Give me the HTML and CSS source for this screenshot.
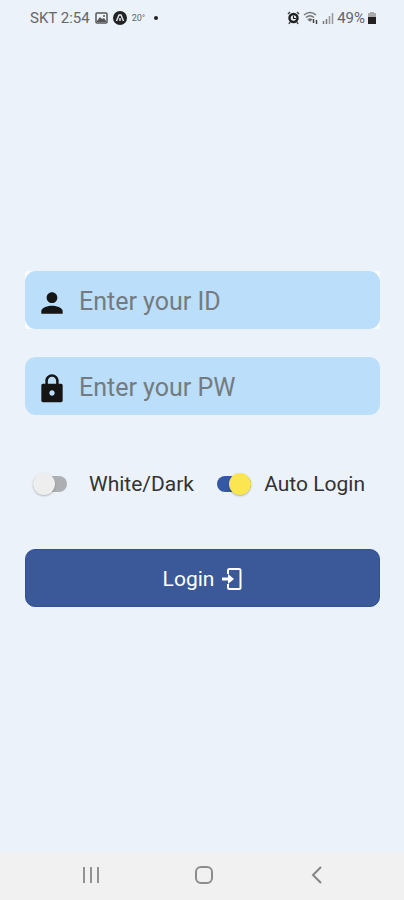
FILE: index.html
```html
<!DOCTYPE html>
<html lang="en">
<head>
<meta charset="utf-8">
<meta name="viewport" content="width=device-width, initial-scale=1">
<title>Login</title>
<link rel="stylesheet" href="styles.css">
</head>
<body>
<header class="status">
  <div class="status-group">
    <span>SKT 2:54</span>
    <svg width="13" height="12" viewBox="0 0 13 12"><rect x="1" y="1" width="11" height="10" rx="1" fill="none" stroke="#555" stroke-width="1.5"/><path d="M2 9l3-4 2 2 2-1 2 3v1H2z" fill="#555"/><circle cx="9" cy="4" r="1" fill="#555"/></svg>
    <svg width="14" height="14" viewBox="0 0 14 14"><circle cx="7" cy="7" r="7" fill="#222"/><path d="M3.500 10L6 4h2l2.500 6M7 7v3" fill="none" stroke="#dfe5ec" stroke-width="1.500"/></svg>
    <span class="temp">20°</span>
    <span class="dot"></span>
  </div>
  <div class="status-group status-right">
    <svg width="13" height="14" viewBox="0 0 13 14"><path d="M1 3l2-2M12 3l-2-2M2 13l1-2M11 13l-1-2" stroke="#444" stroke-width="1.500"/><circle cx="6.500" cy="7" r="4" fill="none" stroke="#222" stroke-width="2.500"/><path d="M6.500 4.500V7.500H9" fill="none" stroke="#222" stroke-width="1.200"/></svg>
    <svg width="16" height="14" viewBox="0 0 16 14"><path d="M1 4q6-5 12 0M3 6.500q4-3.500 8 0M5 9q2-2 4 0" fill="none" stroke="#777" stroke-width="1.500"/><path d="M7 11L4.500 8h5z" fill="#777"/><path d="M10.500 8v4M13.500 9v4" stroke="#444" stroke-width="1.500"/></svg>
    <svg width="12" height="14" viewBox="0 0 12 14"><path d="M1.500 10v3M4.500 8v5" stroke="#777" stroke-width="1.500"/><path d="M7.500 5v8M10.500 2v11" stroke="#999" stroke-width="1.500"/></svg>
    <span>49%</span>
    <svg width="8" height="12" viewBox="0 0 8 12"><path d="M2 0h4v1h2v5H0V1h2z" fill="#aaa"/><path d="M0 5h8v7H0z" fill="#222"/></svg>
  </div>
</header>
<main class="content">
  <form class="login">
    <div class="field-back">
      <label class="field">
        <svg class="field-icon" viewBox="0 0 24 24" aria-hidden="true"><path d="M12 12c2.210 0 4-1.790 4-4s-1.790-4-4-4-4 1.790-4 4 1.790 4 4 4zm0 2c-2.670 0-8 1.340-8 4v2h16v-2c0-2.660-5.330-4-8-4z"/></svg>
        <input class="field-input" type="text" placeholder="Enter your ID" aria-label="ID">
      </label>
    </div>
    <label class="field">
      <svg class="field-icon" viewBox="0 0 24 24" aria-hidden="true"><path d="M18 8h-1V6c0-2.760-2.240-5-5-5S7 3.240 7 6v2H6c-1.100 0-2 .3-2 1.200v11.600c0 .9.9 1.200 2 1.200h12c1.100 0 2-.3 2-1.200V9.200c0-.9-.9-1.200-2-1.200zm-6 9c-1.100 0-2-.9-2-2s.9-2 2-2 2 .9 2 2-.9 2-2 2zm3.100-9H8.900V6c0-1.710 1.390-3.100 3.100-3.100s3.100 1.390 3.100 3.100v2z"/></svg>
      <input class="field-input" type="password" placeholder="Enter your PW" aria-label="Password">
    </label>
    <div class="options">
      <label class="option"><input class="switch" type="checkbox">White/Dark</label>
      <label class="option option-auto"><input class="switch" type="checkbox" checked>Auto Login</label>
    </div>
    <button class="submit" type="submit">Login
      <svg width="20" height="24" viewBox="0 0 20 24" aria-hidden="true"><path d="M6 7V3.500Q6 2 7.500 2H17Q18.500 2 18.500 3.500V20.500Q18.500 22 17 22H7.500Q6 22 6 20.500V17" fill="none" stroke="#fff" stroke-width="2"/><path d="M0 10.500h6V7l6 5-6 5v-3.500H0z" fill="#fff"/></svg>
    </button>
  </form>
</main>
<nav class="navbar">
  <button class="nav-button" type="button" aria-label="Recent apps"><svg width="18" height="18" viewBox="0 0 18 18"><path d="M2 1v16M9 1v16M16 1v16" stroke="#929292" stroke-width="2"/></svg></button>
  <button class="nav-button" type="button" aria-label="Home"><svg width="18" height="18" viewBox="0 0 18 18"><rect x="1" y="1" width="16" height="16" rx="5" fill="none" stroke="#8c8c8c" stroke-width="2"/></svg></button>
  <button class="nav-button" type="button" aria-label="Back"><svg width="18" height="18" viewBox="0 0 18 18"><path d="M13 1L5 9l8 8" fill="none" stroke="#858585" stroke-width="2"/></svg></button>
</nav>
</body>
</html>
```
FILE: styles.css
```css
* {
  box-sizing: border-box;
}

body {
  margin: 0;
  min-height: 100vh;
  display: flex;
  flex-direction: column;
  background: #ecf2fa;
  font-family: Roboto, "Liberation Sans", sans-serif;
  color: #333;
}

.status {
  display: flex;
  justify-content: space-between;
  padding: 10px 28px 0 30px;
  font-size: 15px;
  line-height: 16px;
  color: #666;
}

.status-group {
  display: flex;
  align-items: center;
  gap: 5px;
}

.status-right {
  gap: 3px;
}

.temp {
  font-size: 9px;
}

.dot {
  width: 4px;
  height: 4px;
  margin-left: 4px;
  border-radius: 50%;
  background: #222;
}

.content {
  flex: 1;
  display: flex;
  flex-direction: column;
  justify-content: center;
  padding: 0 24px 0 25px;
}

.login {
  display: flex;
  flex-direction: column;
}

.field-back {
  margin-bottom: 28px;
  border-radius: 3px;
  background: #fafcfd;
}

.field {
  display: flex;
  align-items: center;
  height: 58px;
  padding: 3px 11px 0;
  border-radius: 11px;
  background: #bbdefb;
}

.field-icon {
  flex: none;
  width: 32px;
  height: 32px;
  margin-top: 2px;
  fill: #151515;
}

.field-input {
  flex: 1;
  min-width: 0;
  height: 40px;
  margin-left: 11px;
  padding: 0;
  border: 0;
  outline: 0;
  background: transparent;
  font: 25px/30px Roboto, "Liberation Sans", sans-serif;
  color: #333;
}

.field-input::placeholder {
  color: #747b80;
  opacity: 1;
}

.options {
  display: flex;
  justify-content: space-between;
  margin: 54px 15px 50px 8px;
}

.option {
  display: flex;
  align-items: center;
  gap: 22px;
  font-size: 21px;
  line-height: 30px;
  white-space: nowrap;
}

.option-auto {
  gap: 13px;
}

.switch {
  appearance: none;
  display: flex;
  align-items: center;
  width: 34px;
  height: 16px;
  margin: 0;
  border-radius: 8px;
  background: #adafb3;
}

.switch::before {
  content: "";
  flex: none;
  width: 22px;
  height: 22px;
  border-radius: 50%;
  background: #eeeeee;
  box-shadow: 0 1px 2px rgba(0, 0, 0, 0.25);
}

.switch:checked {
  justify-content: flex-end;
  background: #3558a4;
}

.switch:checked::before {
  background: #fbe652;
}

.submit {
  display: flex;
  align-items: center;
  justify-content: center;
  gap: 8px;
  height: 58px;
  padding: 2px 0 0;
  border: 1px solid #2f5198;
  border-radius: 10px;
  background: #3b5998;
  font: 21px/30px Roboto, "Liberation Sans", sans-serif;
  color: #fff;
}

.navbar {
  display: flex;
  justify-content: center;
  gap: 69px;
  height: 48px;
  padding: 0 0 2px 4px;
  background: #f1f1f1;
}

.nav-button {
  display: flex;
  align-items: center;
  justify-content: center;
  width: 44px;
  padding: 0;
  border: 0;
  background: transparent;
}
```
